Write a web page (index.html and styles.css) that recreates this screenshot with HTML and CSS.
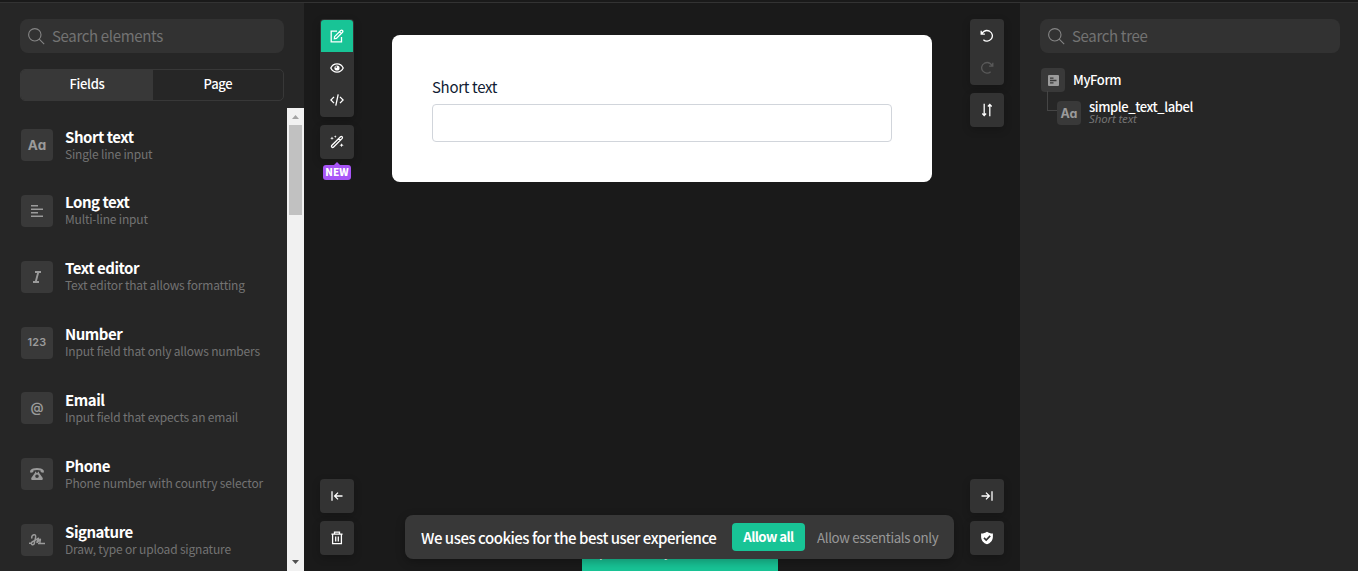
FILE: index.html
```
<!DOCTYPE html>
<html lang="en">
<head>
<meta charset="utf-8">
<title>Form builder</title>
<link rel="stylesheet" href="styles.css">
</head>
<body>
<div class="app">
  <aside class="panel elements">
    <div class="search">
      <svg class="search-icon" viewBox="0 0 17 17"><circle cx="6.8" cy="6.8" r="6.2"/><path d="M11.2 11.2 16.2 16.2"/></svg>
      <span class="placeholder">Search elements</span>
    </div>
    <div class="tabs"><div class="tab active">Fields</div><div class="tab">Page</div></div>
    <div class="scroller">
      <div class="list">
        <div class="item"><div class="tile aa">Aa</div><div class="item-text"><div class="title">Short text</div><div class="desc">Single line input</div></div></div>
        <div class="item"><div class="tile"><svg width="12" height="12" viewBox="0 0 12 12"><path class="ln" d="M0 .8h7M0 4.300h12M0 7.800h7M0 11.300h12"/></svg></div><div class="item-text"><div class="title">Long text</div><div class="desc">Multi-line input</div></div></div>
        <div class="item"><div class="tile"><svg width="10" height="12" viewBox="0 0 10 12"><path class="ln bold" d="M3 1h6M1 11h6M6.300 1 3.700 11"/></svg></div><div class="item-text"><div class="title">Text editor</div><div class="desc">Text editor that allows formatting</div></div></div>
        <div class="item"><div class="tile num">123</div><div class="item-text"><div class="title">Number</div><div class="desc">Input field that only allows numbers</div></div></div>
        <div class="item"><div class="tile at">@</div><div class="item-text"><div class="title">Email</div><div class="desc">Input field that expects an email</div></div></div>
        <div class="item"><div class="tile"><svg width="14" height="12" viewBox="0 0 14 12"><path fill="#9b9b9b" fill-rule="evenodd" d="M7 0C4 0 1.600.8.4 2.200 0 2.800 0 3.500.2 4.300c.1.400.4.500.8.400l1.900-.5c.3-.1.500-.4.500-.7V2.600C5.500 1.800 8.500 1.800 10.600 2.600v.9c0 .3.200.6.500.7l1.900.5c.4.100.7 0 .8-.4.200-.8.200-1.500-.2-2.100C12.400.8 10 0 7 0ZM5 3.700v1.100L1.600 9.400c-.3.400-.4.800-.4 1.300 0 .7.500 1.300 1.200 1.300h9.200c.7 0 1.200-.6 1.200-1.300 0-.5-.1-.9-.4-1.300L9 4.800V3.700H7.900v1H6.100v-1Zm2 2.800a1.800 1.800 0 1 1 0 3.600 1.800 1.800 0 0 1 0-3.600Z"/></svg></div><div class="item-text"><div class="title">Phone</div><div class="desc">Phone number with country selector</div></div></div>
        <div class="item"><div class="tile"><svg width="16" height="12" viewBox="0 0 16 12"><path class="ln" d="M0 9.300h2M9 9.600h7M3 4.500C2 2 4.300.3 6 .9 8 1.800 5.500 6 5.500 8.500c0 2-1.200 2.600-2.600 2-1.200-1-.4-2.500 1.500-3.300C7.500 6 9.500 3.500 9.500 4.500 9.500 6 7.500 8 8 8.400 8.800 8.600 10.500 5 11.200 5.200c.8.500-.8 2.300-.1 3.700"/></svg></div><div class="item-text"><div class="title">Signature</div><div class="desc">Draw, type or upload signature</div></div></div>
      </div>
      <div class="scrollbar">
        <svg width="17" height="17" viewBox="0 0 17 17"><path fill="#a3a3a3" d="m8.500 7 3.500 4H5z"/></svg>
        <div class="thumb"></div>
        <svg class="down" width="17" height="17" viewBox="0 0 17 17"><path fill="#505050" d="m8.500 10 3.500-4H5z"/></svg>
      </div>
    </div>
  </aside>

  <main class="canvas">
    <div class="rail">
      <div class="stack">
        <div class="group">
          <div class="btn green"><svg width="14" height="14" viewBox="0 0 14 14"><path d="M7 2.200H1.200v10.600h10.300V8"/><path d="M4.600 7.600 10.700 1.500q1-.8 1.800 0t0 1.800L6.400 9.400 4.400 9.700ZM9.400 2.800l1.800 1.800"/></svg></div>
          <div class="btn"><svg width="14" height="14" viewBox="0 0 14 14"><path d="M.8 7C2 4.500 4.200 2.900 7 2.900S12 4.500 13.200 7C12 9.500 9.800 11.100 7 11.100S2 9.500.8 7Z"/><circle cx="7" cy="7" r="2.600" fill="#fff" stroke="none"/><circle cx="6.200" cy="6.100" r=".8" fill="#333" stroke="none"/></svg></div>
          <div class="btn"><svg width="14" height="14" viewBox="0 0 14 14"><path d="M4 3.900.9 7 4 10.100M10 3.900 13.100 7 10 10.100M8.200 1.400 5.800 12.600"/></svg></div>
        </div>
        <div class="wand">
          <div class="group"><div class="btn"><svg width="14" height="14" viewBox="0 0 14 14"><path d="m1.700 10.500 8.800-8.800q.9-.6 1.600.1t.1 1.600l-8.800 8.800q-.9.700-1.600-.1t-.1-1.600ZM8.500 3.800l1.700 1.700"/><path fill="#fff" stroke="none" d="m2 1.500.5 1.300 1.300.5-1.300.5L2 5.100l-.5-1.300-1.300-.5 1.300-.5ZM5.300.2l.4 1 1 .4-1 .4-.4 1-.4-1-1-.4 1-.4Zm6.300 8 .6 1.400 1.500.6-1.500.6-.6 1.500-.6-1.500-1.500-.6 1.500-.6Z"/></svg></div></div>
          <div class="new">NEW</div>
        </div>
      </div>
      <div class="stack">
        <div class="group"><div class="btn"><svg width="14" height="14" viewBox="0 0 14 14"><path d="M2 2.300v9.400M4.500 7H12.500M8 3.600 4.600 7 8 10.400"/></svg></div></div>
        <div class="group"><div class="btn"><svg width="14" height="14" viewBox="0 0 14 14"><path d="M1.400 3.200h11.200M2.600 3.200v9.500h8.800V3.200M4.500 3V1.200h5V3M5.700 5.500v5M8.300 5.500v5"/></svg></div></div>
      </div>
    </div>
    <div class="form-card"><div class="label">Short text</div><div class="input"></div></div>
    <div class="rail">
      <div class="stack">
        <div class="group">
          <div class="btn"><svg width="14" height="14" viewBox="0 0 14 14"><path d="M1.200 1.700v3.500h3.700M1.500 5C4 1.200 7 1 9.500 2.200c3.200 1.700 3.700 5.500 1.600 8C9 12.700 5.400 12.700 3.400 10.800"/></svg></div>
          <div class="btn disabled"><svg width="14" height="14" viewBox="0 0 14 14"><path d="M12.800 1.700v3.500H9.100M12.500 5C10 1.200 7 1 4.500 2.200 1.300 3.900.8 7.700 2.900 10.200 5 12.700 8.600 12.700 10.600 10.800"/></svg></div>
        </div>
        <div class="group"><div class="btn"><svg width="14" height="14" viewBox="0 0 14 14"><path d="M4.200 .8v11M2.300 10.500l1.900 2L6.100 10.500M9.800 13.200V2M7.900 3.500l1.900-2L11.700 3.500"/></svg></div></div>
      </div>
      <div class="stack">
        <div class="group"><div class="btn"><svg width="14" height="14" viewBox="0 0 14 14"><path d="M12 2.300v9.400M1.500 7H9.500M6 3.600 9.400 7 6 10.400"/></svg></div></div>
        <div class="group"><div class="btn"><svg width="14" height="14" viewBox="0 0 14 14"><path fill="#fff" stroke="none" d="M7 .7C8.500 1.900 10.500 2.400 12.900 2.500v3.200C12.900 9.400 10.500 12 7 13.300 3.500 12 1.100 9.400 1.100 5.700V2.500C3.500 2.400 5.500 1.900 7 .7Z"/><path class="check" d="m4 6.900 2.200 2.200 4-4.200"/></svg></div></div>
      </div>
    </div>
  </main>

  <aside class="panel tree">
    <div class="search">
      <svg class="search-icon" viewBox="0 0 17 17"><circle cx="6.800" cy="6.800" r="6.200"/><path d="M11.200 11.200 16.200 16.200"/></svg>
      <span class="placeholder">Search tree</span>
    </div>
    <div class="node"><div class="tile small"><svg width="11" height="11" viewBox="0 0 11 11"><rect width="11" height="11" rx="1" fill="#9b9b9b"/><path d="M2 3.200h3.500M2 5.500h6.500M2 7.800h3.500" stroke="#393939" stroke-width="1.300"/></svg></div><div class="node-name">MyForm</div></div>
    <div class="node child"><div class="branch"></div><div class="tile small aa">Aa</div><div class="node-text"><div class="node-name">simple_text_label</div><div class="node-type">Short text</div></div></div>
  </aside>
</div>
<div class="promo"><span>p</span><span>y</span></div>
<div class="cookies">
  <div class="cookie-text">We uses cookies for the best user experience</div>
  <div class="allow">Allow all</div>
  <div class="essential">Allow essentials only</div>
</div>
</body>
</html>
```
FILE: styles.css
```
* { box-sizing: border-box; }
body {
  margin: 0;
  width: 1358px;
  height: 571px;
  overflow: hidden;
  position: relative;
  background: #1a1a1a;
  color: #fff;
  font-family: "Noto Sans CJK SC", "Noto Sans", sans-serif;
  white-space: nowrap;
}
svg { display: block; flex: none; }
.app {
  display: grid;
  grid-template-columns: 304px 1fr 338px;
  height: 569px;
  margin-top: 2px;
  border-top: 1px solid #333;
}
.panel { background: #262626; min-width: 0; padding-top: 16px; }
.elements { display: flex; flex-direction: column; height: 568px; }
.search {
  height: 34px;
  margin: 0 20px;
  padding-left: 8px;
  display: flex;
  align-items: center;
  gap: 7px;
  border-radius: 8px;
  background: #323232;
  flex: none;
}
.tree .search { margin-right: 18px; }
.search-icon { width: 17px; height: 17px; fill: none; stroke: #858585; stroke-width: 1.1; }
.placeholder { font-size: 15px; line-height: 34px; letter-spacing: -.34px; color: #737373; }
.tabs {
  height: 32px;
  margin: 16px 20px 0;
  display: flex;
  border: 1px solid #383838;
  border-radius: 5px;
  overflow: hidden;
  flex: none;
}
.tab { flex: 1; text-align: center; font-size: 13px; font-weight: 500; line-height: 28px; letter-spacing: -.3px; }
.tab.active { background: #383838; flex: 0 0 132px; }
.scroller { display: flex; flex: 1; min-height: 0; margin-top: 7px; overflow: hidden; }
.list { flex: 1; padding: 4.2px 0 0 21px; overflow: hidden; }
.item { display: flex; align-items: center; gap: 12px; height: 65.83px; }
.item-text { padding-bottom: 1px; }
.tile {
  width: 32px;
  height: 32px;
  display: flex;
  align-items: center;
  justify-content: center;
  border-radius: 4px;
  background: #393939;
  color: #9b9b9b;
  font-family: Inter, "Liberation Sans", sans-serif;
  font-weight: 700;
  flex: none;
}
.aa { font-size: 13.5px; font-feature-settings: "cv11"; }
.num { font-size: 10.8px; font-weight: 600; letter-spacing: .2px; }
.at { font-size: 13px; font-weight: 600; padding-bottom: 2px; }
.ln { fill: none; stroke: #9b9b9b; stroke-width: 1.5; }
.bold { stroke-width: 1.9; }
.title { font-size: 15px; font-weight: 700; line-height: 18px; letter-spacing: -.47px; }
.desc { font-size: 12px; line-height: 16px; letter-spacing: -.18px; color: #737373; }
.scrollbar { width: 17px; background: #f1f1f1; display: flex; flex-direction: column; flex: none; }
.thumb { width: 13px; height: 90px; margin-left: 2px; background: #c1c1c1; }
.down { margin-top: auto; }

.canvas { display: flex; justify-content: space-between; align-items: flex-start; padding: 16px; }
.rail { height: 536px; width: 34px; display: flex; flex-direction: column; justify-content: space-between; }
.stack { display: flex; flex-direction: column; gap: 8px; }
.group { padding: 1px; border-radius: 4px; background: #333; overflow: hidden; box-shadow: 0 3px 8px #0003; }
.btn { width: 32px; height: 32px; display: flex; align-items: center; justify-content: center; }
.btn svg { fill: none; stroke: #fff; stroke-width: 1.3; }
.btn.green { background: #18c496; border-radius: 3px 3px 0 0; }
.disabled { opacity: .18; }
.btn .check { stroke: #333; stroke-width: 1.6; }
.wand { position: relative; }
.new {
  position: absolute;
  left: 3px;
  top: 40px;
  width: 28px;
  height: 15px;
  border-radius: 3px;
  background: #a855f7;
  text-align: center;
  font-size: 10px;
  font-weight: 900;
  line-height: 14px;
}
.new::before {
  content: "";
  position: absolute;
  left: 11px;
  top: -3px;
  border: 3px solid transparent;
  border-top: 0;
  border-bottom-color: #a855f7;
}
.form-card {
  width: 540px;
  height: 147px;
  margin-top: 16px;
  padding: 40px;
  border-radius: 8px;
  background: #fff;
  color: #111c33;
}
.label { font-size: 15px; line-height: 24px; letter-spacing: -.32px; }
.input { height: 38px; margin-top: 5px; border: 1px solid #d1d5db; border-radius: 4px; }

.node { display: flex; align-items: center; gap: 8px; margin: 15px 0 0 21px; height: 24px; }
.node.child { margin: 9px 0 0 27px; gap: 0; }
.branch { width: 10px; height: 20px; border: solid #454545; border-width: 0 0 1px 1px; margin-bottom: 24px; }
.tile.small { width: 24px; height: 24px; }
.small.aa { font-size: 12.5px; }
.node-name { font-size: 13px; font-weight: 500; line-height: 14px; letter-spacing: -.4px; }
.node-text { margin-left: 8px; padding-bottom: 2px; }
.node-type { font-family: "Noto Sans", sans-serif; font-size: 11.5px; line-height: 10px; font-style: italic; letter-spacing: -.15px; color: #737373; }

.promo {
  position: absolute;
  left: 582px;
  top: 543px;
  width: 196px;
  height: 28px;
  padding-left: 17px;
  display: flex;
  gap: 57px;
  background: #18c496;
  font-size: 13px;
  line-height: 18px;
}
.cookies {
  position: absolute;
  left: 405px;
  top: 515px;
  width: 549px;
  height: 44px;
  padding-left: 16px;
  display: flex;
  align-items: center;
  border-radius: 8px;
  background: #383838;
  box-shadow: 0 3px 10px #0004;
}
.cookie-text { width: 311px; font-size: 15px; font-weight: 500; letter-spacing: -.48px; }
.allow {
  width: 73px;
  height: 28px;
  border-radius: 4px;
  background: #18c496;
  text-align: center;
  font-size: 13.3px;
  font-weight: 700;
  line-height: 28px;
  letter-spacing: -.6px;
}
.essential { margin-left: 12px; font-size: 13.3px; letter-spacing: -.35px; color: #999; }
```
